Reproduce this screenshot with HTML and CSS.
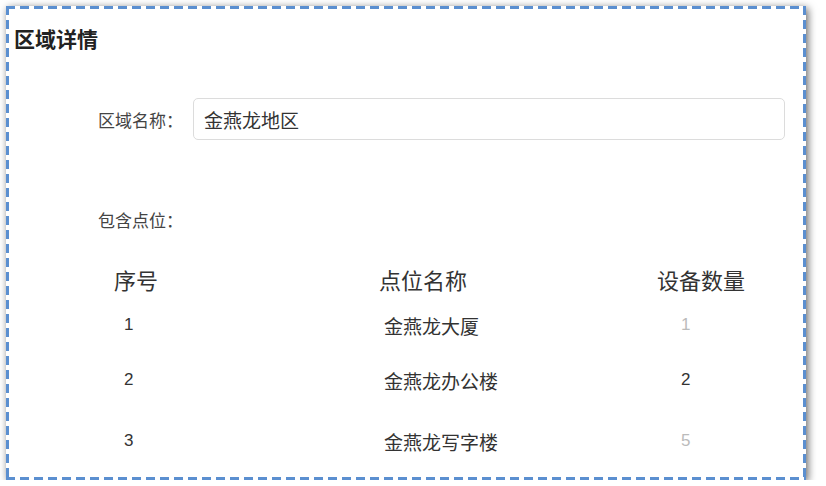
FILE: index.html
```html
<!DOCTYPE html>
<html lang="zh-CN">
<head>
    <meta charset="UTF-8">
    <meta name="viewport" content="width=device-width, initial-scale=1.0">
    <title>区域详情</title>
    <link rel="stylesheet" href="styles.css">
</head>
<body>
<div class="card">
    <h2 class="title">区域详情</h2>

    <div class="form-row">
        <label class="label" for="area-name">区域名称：</label>
        <input class="input" id="area-name" type="text" value="金燕龙地区">
    </div>

    <div class="section-label">包含点位：</div>

    <table class="points">
        <thead>
        <tr>
            <th class="col-no">序号</th>
            <th class="col-name">点位名称</th>
            <th class="col-count">设备数量</th>
        </tr>
        </thead>
        <tbody>
        <tr class="row-1">
            <td class="col-no">1</td>
            <td class="col-name">金燕龙大厦</td>
            <td class="col-count muted">1</td>
        </tr>
        <tr class="row-2">
            <td class="col-no">2</td>
            <td class="col-name">金燕龙办公楼</td>
            <td class="col-count">2</td>
        </tr>
        <tr class="row-3">
            <td class="col-no">3</td>
            <td class="col-name">金燕龙写字楼</td>
            <td class="col-count muted">5</td>
        </tr>
        </tbody>
    </table>
</div>
</body>
</html>
```

FILE: styles.css
```css
body {
    margin: 0;
    background: #fff;
    font-family: "Liberation Sans", "Noto Sans CJK SC", sans-serif;
    color: #333;
}
.card {
    box-sizing: border-box;
    width: 800px;
    height: 474px;
    margin: 6px 0 0 6px;
    padding: 20px 21px 0 8px;
    background:
        repeating-linear-gradient(90deg, #5b8fd0 0 9px, transparent 9px 14px) left top / 100% 3px no-repeat,
        repeating-linear-gradient(90deg, #5b8fd0 0 9px, transparent 9px 14px) left bottom / 100% 3px no-repeat,
        repeating-linear-gradient(180deg, #5b8fd0 0 9px, transparent 9px 14px) left top / 3px 100% no-repeat,
        repeating-linear-gradient(180deg, #5b8fd0 0 9px, transparent 9px 14px) right top / 3px 100% no-repeat,
        #fff;
    box-shadow: 2px 2px 8px rgba(0,0,0,0.6);
}
.title {
    margin: 0;
    font-size: 21px;
    line-height: 28px;
    font-weight: bold;
    color: #222;
}
.form-row {
    display: flex;
    align-items: center;
    gap: 10px;
    margin: 44px 0 0 84px;
}
.label {
    font-size: 17px;
    color: #444;
}
.input {
    flex: 1;
    box-sizing: border-box;
    height: 42px;
    padding: 0 10px;
    border: 1px solid #dcdcdc;
    border-radius: 5px;
    font-family: inherit;
    font-size: 19px;
    color: #333;
    outline: none;
}
.section-label {
    margin: 70px 0 0 84px;
    font-size: 17px;
    line-height: 24px;
    color: #444;
}
.points {
    width: 663px;
    margin: 22px 0 0 100px;
    border-collapse: collapse;
    table-layout: fixed;
}
.points th,
.points td {
    padding: 0;
    text-align: left;
    vertical-align: middle;
}
.points th {
    height: 46px;
    font-size: 22px;
    font-weight: normal;
    color: #333;
}
.points td {
    font-size: 19px;
    color: #333;
}
.points th.col-no { width: 265px; }
.points th.col-name { width: 278px; }
.points th.col-count { width: 120px; }
.points td.col-no { padding-left: 10px; font-size: 17px; }
.points td.col-name { padding-left: 5px; }
.points td.col-count { padding-left: 24px; font-size: 17px; }
.points td.muted { color: #bbb; }
.row-1 td { height: 46px; }
.row-2 td { height: 64px; }
.row-3 td { height: 58px; }
```
